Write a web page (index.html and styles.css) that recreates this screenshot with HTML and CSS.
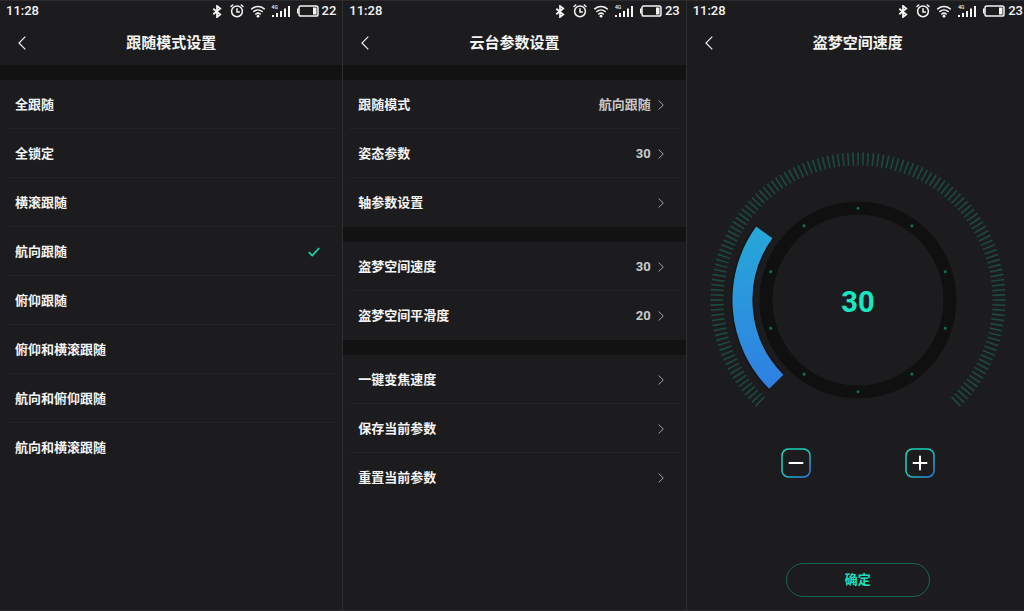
FILE: index.html
```html
<!DOCTYPE html>
<html lang="zh-CN">
<head>
    <meta charset="UTF-8">
    <meta name="viewport" content="width=device-width, initial-scale=1.0">
    <title>云台参数设置</title>
    <link rel="stylesheet" href="styles.css">
</head>
<body>
    <svg class="sprite" aria-hidden="true">
        <symbol id="bluetooth" viewBox="0 0 10 14">
            <path d="M1 4 8.500 10.200 5 13V1l3.500 2.800L1 10" fill="none" stroke="currentColor" stroke-width="1.900"/>
        </symbol>
        <symbol id="alarm" viewBox="0 0 14 14">
            <g fill="none" stroke="currentColor" stroke-width="1.500" stroke-linecap="round">
                <circle cx="7" cy="7.300" r="5.400"/>
                <path d="M7 4.700v3.200h2.400M1 2.500l1.700-1.500M13 2.500l-1.700-1.500"/>
            </g>
        </symbol>
        <symbol id="wifi" viewBox="0 0 14 14">
            <path d="M.8 4.800a9.500 9.500 0 0 1 12.400 0M2.800 7.500a6.400 6.400 0 0 1 8.400 0M4.800 10a3.400 3.400 0 0 1 4.400 0" fill="none" stroke="currentColor" stroke-width="1.600" stroke-linecap="round"/>
            <circle cx="7" cy="12.200" r="1.400" fill="currentColor"/>
        </symbol>
        <symbol id="signal" viewBox="0 0 18 14">
            <path d="M0 11h2v2H0zM4 9h2v4H4zM8 7h2v6H8zM12 4.500h2V13h-2zM16 2h2v11h-2z" fill="currentColor"/>
        </symbol>
        <symbol id="battery" viewBox="0 0 22 12">
            <rect x="2" y="1" width="19" height="10" rx="1.800" fill="none" stroke="currentColor" stroke-width="1.500"/>
            <path d="M0 3.500h1.500v5H0zM16 2.500h3.500v7H16z" fill="currentColor"/>
        </symbol>
        <symbol id="back" viewBox="0 0 8 14">
            <path d="M7.300 .7 1 7l6.300 6.300" fill="none" stroke="currentColor" stroke-width="1.200"/>
        </symbol>
        <symbol id="next" viewBox="0 0 6 10">
            <path d="M.6 .5 5.300 5 .6 9.500" fill="none" stroke="currentColor"/>
        </symbol>
        <symbol id="check" viewBox="0 0 12 10">
            <path d="M.8 5.200 4.200 8.600 11.200 1" fill="none" stroke="currentColor" stroke-width="1.700"/>
        </symbol>
        <linearGradient id="edge" x1="0" y1="0" x2="1" y2="1">
            <stop offset=".4" stop-color="#1bd0b8"/>
            <stop offset="1" stop-color="#2e7ae6"/>
        </linearGradient>
    </svg>

    <div class="screens">
        <main class="screen">
            <div class="status-bar">
                <span class="time">11:28</span>
                <svg class="bluetooth"><use href="#bluetooth"/></svg>
                <svg class="alarm"><use href="#alarm"/></svg>
                <svg class="wifi"><use href="#wifi"/></svg>
                <span class="signal"><svg><use href="#signal"/></svg><span class="net">4G</span></span>
                <svg class="battery"><use href="#battery"/></svg>
                <span>22</span>
            </div>
            <header class="title-bar">
                <button class="back" aria-label="返回"><svg><use href="#back"/></svg></button>
                <h1>跟随模式设置</h1>
            </header>
            <form class="group">
                <label class="row"><span>全跟随</span><input type="radio" name="mode"><svg class="check"><use href="#check"/></svg></label>
                <label class="row"><span>全锁定</span><input type="radio" name="mode"><svg class="check"><use href="#check"/></svg></label>
                <label class="row"><span>横滚跟随</span><input type="radio" name="mode"><svg class="check"><use href="#check"/></svg></label>
                <label class="row"><span>航向跟随</span><input type="radio" name="mode" checked><svg class="check"><use href="#check"/></svg></label>
                <label class="row"><span>俯仰跟随</span><input type="radio" name="mode"><svg class="check"><use href="#check"/></svg></label>
                <label class="row"><span>俯仰和横滚跟随</span><input type="radio" name="mode"><svg class="check"><use href="#check"/></svg></label>
                <label class="row"><span>航向和俯仰跟随</span><input type="radio" name="mode"><svg class="check"><use href="#check"/></svg></label>
                <label class="row"><span>航向和横滚跟随</span><input type="radio" name="mode"><svg class="check"><use href="#check"/></svg></label>
            </form>
        </main>

        <section class="screen">
            <div class="status-bar">
                <span class="time">11:28</span>
                <svg class="bluetooth"><use href="#bluetooth"/></svg>
                <svg class="alarm"><use href="#alarm"/></svg>
                <svg class="wifi"><use href="#wifi"/></svg>
                <span class="signal"><svg><use href="#signal"/></svg><span class="net">4G</span></span>
                <svg class="battery"><use href="#battery"/></svg>
                <span>23</span>
            </div>
            <header class="title-bar">
                <button class="back" aria-label="返回"><svg><use href="#back"/></svg></button>
                <h1>云台参数设置</h1>
            </header>
            <nav class="group">
                <a class="row" href="#"><span>跟随模式</span><span class="value">航向跟随</span><svg class="next"><use href="#next"/></svg></a>
                <a class="row" href="#"><span>姿态参数</span><span class="value">30</span><svg class="next"><use href="#next"/></svg></a>
                <a class="row" href="#"><span>轴参数设置</span><svg class="next"><use href="#next"/></svg></a>
            </nav>
            <nav class="group">
                <a class="row" href="#"><span>盗梦空间速度</span><span class="value">30</span><svg class="next"><use href="#next"/></svg></a>
                <a class="row" href="#"><span>盗梦空间平滑度</span><span class="value">20</span><svg class="next"><use href="#next"/></svg></a>
            </nav>
            <nav class="group">
                <a class="row" href="#"><span>一键变焦速度</span><svg class="next"><use href="#next"/></svg></a>
                <a class="row" href="#"><span>保存当前参数</span><svg class="next"><use href="#next"/></svg></a>
                <a class="row" href="#"><span>重置当前参数</span><svg class="next"><use href="#next"/></svg></a>
            </nav>
        </section>

        <section class="screen">
            <div class="status-bar">
                <span class="time">11:28</span>
                <svg class="bluetooth"><use href="#bluetooth"/></svg>
                <svg class="alarm"><use href="#alarm"/></svg>
                <svg class="wifi"><use href="#wifi"/></svg>
                <span class="signal"><svg><use href="#signal"/></svg><span class="net">4G</span></span>
                <svg class="battery"><use href="#battery"/></svg>
                <span>23</span>
            </div>
            <header class="title-bar">
                <button class="back" aria-label="返回"><svg><use href="#back"/></svg></button>
                <h1>盗梦空间速度</h1>
            </header>
            <div class="speed">
                <svg class="dial" viewBox="-150 -150 300 262">
                    <defs>
                        <linearGradient id="arc" gradientUnits="userSpaceOnUse" x1="-110" y1="-74" x2="-90" y2="89">
                            <stop offset="0" stop-color="#26a8d8"/>
                            <stop offset="1" stop-color="#307fe3"/>
                        </linearGradient>
                    </defs>
                    <!-- one tick every 2 degrees, 136 degrees each side of the top -->
                    <circle class="ticks" r="141" pathLength="360" transform="rotate(133.700)"/>
                    <circle class="ring" r="92"/>
                    <circle class="dots" r="91.700" pathLength="360" transform="rotate(-90)"/>
                    <path class="arc-shadow" d="M-81.700 81.700A115.500 115.500 0 0 1-93.700-67.600"/>
                    <path class="arc" d="M-81.700 81.700A115.500 115.500 0 0 1-93.700-67.600"/>
                    <text class="number" y="12">30</text>
                </svg>
                <div class="steps">
                    <button class="step" aria-label="减">
                        <svg viewBox="0 0 30 30">
                            <rect x="1" y="1" width="28" height="28" rx="6.500" stroke="url(#edge)"/>
                            <path d="M8.500 15h13"/>
                        </svg>
                    </button>
                    <button class="step" aria-label="加">
                        <svg viewBox="0 0 30 30">
                            <rect x="1" y="1" width="28" height="28" rx="6.500" stroke="url(#edge)"/>
                            <path d="M8.500 15h13M15 8.500v13"/>
                        </svg>
                    </button>
                </div>
                <button class="confirm">确定</button>
            </div>
        </section>
    </div>

    <script>
        const dial = document.querySelector('.number');
        const steps = document.querySelectorAll('.step');

        function change(delta) {
            const next = Number(dial.textContent) + delta;
            dial.textContent = Math.max(0, Math.min(100, next));
        }

        steps[0].addEventListener('click', () => change(-1));
        steps[1].addEventListener('click', () => change(1));

        // 刻度：137 条
        document.querySelector('.ticks').style.strokeDasharray = '0.65 1.35 '.repeat(136) + '0.65 87.35';
    </script>
</body>
</html>
```
FILE: styles.css
```css
* {
    box-sizing: border-box;
}
body {
    margin: 0;
    overflow: hidden;
    background-color: #1c1c1e;
    color: #f4f4f4;
    font-family: Roboto, "Noto Sans CJK SC", sans-serif;
    font-size: 13px;
    line-height: 18px;
}
button {
    padding: 0;
    border: none;
    background: none;
    color: inherit;
    font: inherit;
    cursor: pointer;
}
svg {
    display: block;
}
.sprite {
    position: absolute;
    width: 0;
    height: 0;
}
.screens {
    display: grid;
    grid-template-columns: repeat(3, 1fr);
    min-height: 100vh;
    margin-right: -6px;
    border-top: 1px solid #2b2b2d;
    border-bottom: 1px solid #2b2b2d;
}
.screen {
    border-right: 1px solid #2f2f31;
}
.status-bar {
    display: flex;
    align-items: center;
    height: 20px;
    padding: 0 6px;
    font-weight: 500;
}
.time {
    flex-grow: 1;
}
.bluetooth {
    width: 10px;
    height: 13px;
    margin-right: 8px;
}
.alarm,
.wifi {
    width: 14px;
    height: 14px;
    margin-right: 7px;
}
.signal {
    position: relative;
    margin-right: 7px;
}
.signal svg {
    width: 18px;
    height: 14px;
}
.net {
    position: absolute;
    top: 0;
    left: 0;
    font-size: 5px;
    line-height: 6px;
}
.battery {
    width: 22px;
    height: 12px;
    margin-right: 3px;
}
.title-bar {
    display: grid;
    grid-template-columns: 44px 1fr 44px;
    align-items: center;
    height: 44px;
}
.title-bar h1 {
    margin: 0;
    font-size: 15px;
    font-weight: 700;
    text-align: center;
}
.back {
    display: flex;
    justify-content: center;
    padding: 8px 0;
}
.back svg {
    width: 8px;
    height: 14px;
}
.group {
    border-top: 15px solid #121212;
}
.row {
    display: flex;
    align-items: center;
    height: 49px;
    margin: 0 6px;
    padding: 1px 16px 0 9px;
    border-bottom: 1px solid #232325;
    color: inherit;
    font-weight: 700;
    text-decoration: none;
    cursor: pointer;
}
.row:last-child {
    border-bottom-color: transparent;
}
.row span:first-child {
    flex-grow: 1;
}
.row input {
    appearance: none;
    margin: 0;
}
.check {
    width: 12px;
    height: 10px;
    color: #17d9b5;
    visibility: hidden;
}
input:checked + .check {
    visibility: visible;
}
.value {
    margin-right: 7px;
    color: #c9c9ca;
}
.next {
    width: 6px;
    height: 10px;
    color: #a5a5a7;
}
.speed {
    display: flex;
    flex-direction: column;
    align-items: center;
    padding-top: 85px;
}
.dial {
    width: 300px;
    max-width: 100%;
}
.ticks {
    fill: none;
    stroke: #1c4a41;
    stroke-width: 13;
}
.ring {
    fill: none;
    stroke: #101011;
    stroke-width: 13;
}
.dots {
    fill: none;
    stroke: #156b57;
    stroke-width: 3;
    stroke-linecap: round;
    stroke-dasharray: 0.01 35.99;
}
.arc-shadow {
    fill: none;
    stroke: #151516;
    stroke-width: 23;
}
.arc {
    fill: none;
    stroke: url(#arc);
    stroke-width: 20;
}
.number {
    fill: #17e8c2;
    font-size: 29px;
    font-weight: 700;
    text-anchor: middle;
}
.steps {
    display: flex;
    gap: 94px;
    margin-top: 36px;
}
.step {
    width: 30px;
    height: 30px;
}
.step svg {
    fill: none;
    stroke: #fff;
    stroke-width: 2;
    stroke-linecap: round;
}
.step rect {
    stroke-width: 1.5;
}
.confirm {
    width: 144px;
    height: 34px;
    margin-top: 85px;
    border: 1px solid #1c6355;
    border-radius: 17px;
    color: #17e0ba;
    font-weight: 700;
}
```
